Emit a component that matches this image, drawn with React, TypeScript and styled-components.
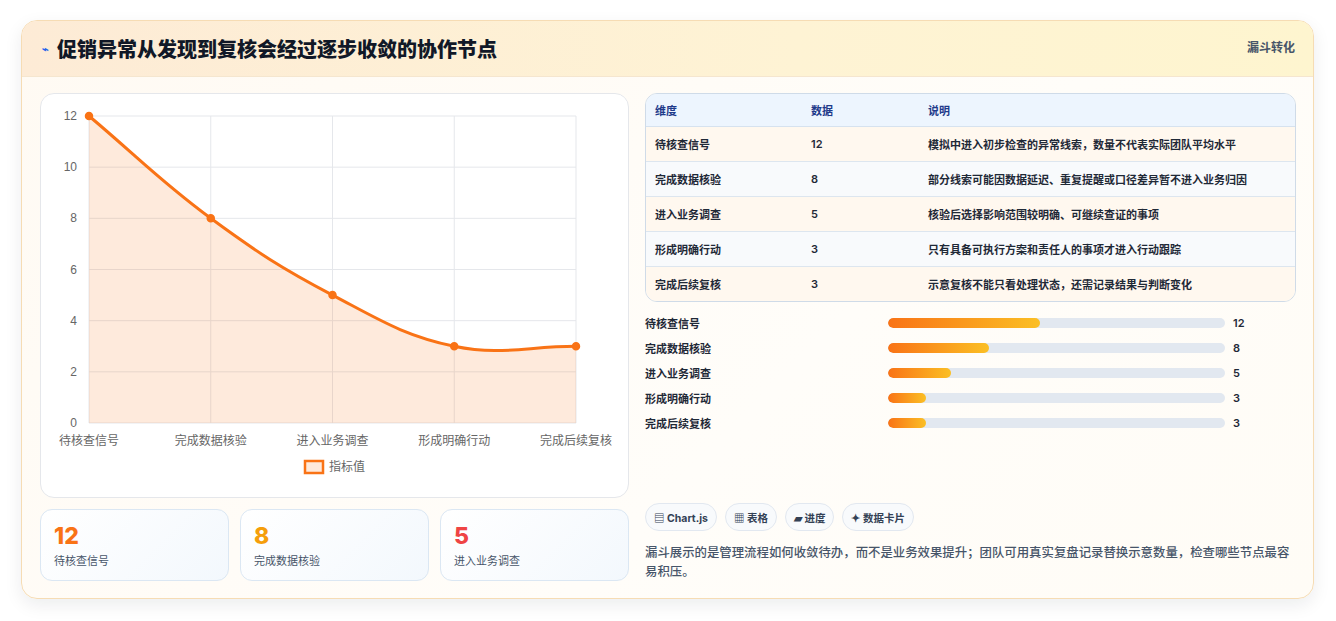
import React from 'react';
import styled, { createGlobalStyle } from 'styled-components';

const GlobalStyle = createGlobalStyle`
  body {
    margin: 0;
    background: #ffffff;
    font-family: Inter, "Noto Sans CJK SC", "Noto Sans", sans-serif;
  }
`;

const Page = styled.div`
  padding: 20px 22px 22px 21px;
`;

const Card = styled.section`
  border: 1px solid #f6dcb4;
  border-radius: 16px;
  background: linear-gradient(135deg, #fffaf3 0%, #fffdf9 60%, #fffcf6 100%);
  box-shadow: 0 6px 18px rgba(15, 23, 42, 0.08);
  overflow: hidden;
`;

const Header = styled.header`
  height: 55px;
  display: flex;
  justify-content: space-between;
  padding: 0 18px 0 20px;
  background: linear-gradient(90deg, #fdebd6 0%, #fef3d4 60%, #fef5cf 100%);
  border-bottom: 1px solid #f5e6cf;
`;

const Title = styled.h1`
  margin: 0;
  align-self: center;
  font-size: 20px;
  font-weight: 800;
  color: #111827;
  display: flex;
  align-items: center;
  gap: 8px;
`;

const TitleIcon = styled.span`
  font-size: 11px;
  color: #2563eb;
`;

const Tag = styled.span`
  margin-top: 17px;
  font-size: 12px;
  font-weight: 700;
  color: #475569;
`;

const Body = styled.div`
  display: grid;
  grid-template-columns: 589px 651px;
  gap: 16px;
  padding: 16px 17px 17px 18px;
`;

const Column = styled.div`
  display: flex;
  flex-direction: column;
`;

const ChartCard = styled.div`
  height: 403px;
  border: 1px solid #e5e7eb;
  border-radius: 14px;
  background: #ffffff;
`;

const Stats = styled.div`
  display: grid;
  grid-template-columns: repeat(3, 1fr);
  gap: 11px;
  margin-top: 11px;
`;

const StatCard = styled.div`
  height: 72px;
  box-sizing: border-box;
  padding: 12px 13px;
  border: 1px solid #dbe7f3;
  border-radius: 12px;
  background: linear-gradient(135deg, #ffffff 0%, #f3f8fd 100%);
`;

const StatValue = styled.div<{ $color: string }>`
  font-size: 23px;
  font-weight: 800;
  line-height: 28px;
  color: ${p => p.$color};
`;

const StatLabel = styled.div`
  font-size: 11px;
  color: #475569;
  margin-top: 2px;
`;

const Table = styled.table`
  width: 100%;
  border-collapse: separate;
  border-spacing: 0;
  border: 1px solid #cfdbe8;
  border-radius: 12px;
  overflow: hidden;
  font-size: 11px;
`;

const Th = styled.th`
  text-align: left;
  height: 32px;
  padding: 0 9px;
  background: #edf5fe;
  color: #1e3a8a;
  font-weight: 700;
  border-bottom: 1px solid #d6e2ef;
`;

const Tr = styled.tr<{ $alt: boolean }>`
  background: ${p => (p.$alt ? '#f8fafc' : '#fff8ef')};
`;

const Td = styled.td<{ $last: boolean }>`
  height: 34px;
  padding: 0 9px;
  color: #1f2937;
  font-weight: 600;
  border-bottom: ${p => (p.$last ? 'none' : '1px solid #dde6ef')};
`;

const Bars = styled.div`
  display: flex;
  flex-direction: column;
  gap: 11px;
  margin-top: 13px;
`;

const BarRow = styled.div`
  display: grid;
  grid-template-columns: 235px 337px auto;
  align-items: center;
  column-gap: 8px;
  height: 14px;
  font-size: 11px;
  font-weight: 600;
  color: #1f2937;
`;

const Track = styled.div`
  height: 10px;
  border-radius: 5px;
  background: #e2e8f0;
  overflow: hidden;
`;

const Fill = styled.div`
  height: 100%;
  border-radius: 5px;
  background: linear-gradient(90deg, #f97316, #fbbf24);
`;

const Chips = styled.div`
  display: flex;
  gap: 8px;
  margin-top: auto;
`;

const Chip = styled.span`
  height: 28px;
  box-sizing: border-box;
  display: inline-flex;
  align-items: center;
  padding: 0 8px;
  border: 1px solid #e2e8f0;
  border-radius: 14px;
  background: #f8fafc;
  font-size: 10.5px;
  font-weight: 700;
  color: #334155;
`;

const Note = styled.p`
  margin: 12px 0 0;
  font-size: 12.4px;
  line-height: 19px;
  font-weight: 500;
  color: #475569;
`;

const rows = [
  { name: '待核查信号', value: 12, desc: '模拟中进入初步检查的异常线索，数量不代表实际团队平均水平' },
  { name: '完成数据核验', value: 8, desc: '部分线索可能因数据延迟、重复提醒或口径差异暂不进入业务归因' },
  { name: '进入业务调查', value: 5, desc: '核验后选择影响范围较明确、可继续查证的事项' },
  { name: '形成明确行动', value: 3, desc: '只有具备可执行方案和责任人的事项才进入行动跟踪' },
  { name: '完成后续复核', value: 3, desc: '示意复核不能只看处理状态，还需记录结果与判断变化' },
];

const X0 = 48;
const X1 = 535;
const Y0 = 22;
const Y1 = 329;
const px = (i: number) => X0 + (i * (X1 - X0)) / 4;
const py = (v: number) => Y1 - (v / 12) * (Y1 - Y0);

// chart.js style spline, tension 0.4
const curvePath = () => {
  const pts = rows.map((r, i) => [px(i), py(r.value)]);
  const t = 0.4;
  const cps = pts.map((p, i) => {
    const prev = pts[i - 1] || p;
    const next = pts[i + 1] || p;
    const d01 = Math.hypot(p[0] - prev[0], p[1] - prev[1]);
    const d12 = Math.hypot(next[0] - p[0], next[1] - p[1]);
    const s = d01 + d12 || 1;
    const fa = (t * d01) / s;
    const fb = (t * d12) / s;
    return {
      prev: [p[0] - fa * (next[0] - prev[0]), p[1] - fa * (next[1] - prev[1])],
      next: [p[0] + fb * (next[0] - prev[0]), p[1] + fb * (next[1] - prev[1])],
    };
  });
  let d = `M${pts[0][0]},${pts[0][1]}`;
  for (let i = 1; i < pts.length; i++) {
    const a = cps[i - 1].next;
    const b = cps[i].prev;
    d += ` C${a[0]},${a[1]} ${b[0]},${b[1]} ${pts[i][0]},${pts[i][1]}`;
  }
  return d;
};

const LineChart: React.FC = () => {
  const line = curvePath();
  const area = `${line} L${X1},${Y1} L${X0},${Y1} Z`;
  return (
    <svg width="589" height="403" style={{ display: 'block' }}>
      {[0, 2, 4, 6, 8, 10, 12].map(v => (
        <g key={v}>
          <line x1={X0} x2={X1} y1={py(v)} y2={py(v)} stroke="#e5e7eb" />
          <text x={36} y={py(v) + 4} fontSize="12" fill="#666" textAnchor="end" fontFamily="Liberation Sans, sans-serif">{v}</text>
        </g>
      ))}
      {rows.map((r, i) => (
        <g key={r.name}>
          <line x1={px(i)} x2={px(i)} y1={Y0} y2={Y1} stroke="#e5e7eb" />
          <text x={px(i)} y={351} fontSize="12" fill="#666" textAnchor="middle">{r.name}</text>
        </g>
      ))}
      <path d={area} fill="rgba(249,115,22,0.15)" />
      <path d={line} fill="none" stroke="#f97316" strokeWidth="3" />
      {rows.map((r, i) => (
        <circle key={r.name} cx={px(i)} cy={py(r.value)} r="3.5" fill="#f97316" stroke="#f97316" strokeWidth="1.5" />
      ))}
      <rect x={264} y={367} width={18} height={12} fill="rgba(249,115,22,0.15)" stroke="#f97316" strokeWidth="2.5" />
      <text x={288} y={377} fontSize="12" fill="#666">指标值</text>
    </svg>
  );
};

const stats = [
  { value: 12, label: '待核查信号', color: '#f97316' },
  { value: 8, label: '完成数据核验', color: '#f59e0b' },
  { value: 5, label: '进入业务调查', color: '#ef4444' },
];

const App: React.FC = () => (
  <Page>
    <GlobalStyle />
    <Card>
      <Header>
        <Title><TitleIcon>⌁</TitleIcon>促销异常从发现到复核会经过逐步收敛的协作节点</Title>
        <Tag>漏斗转化</Tag>
      </Header>
      <Body>
        <Column>
          <ChartCard>
            <LineChart />
          </ChartCard>
          <Stats>
            {stats.map(s => (
              <StatCard key={s.label}>
                <StatValue $color={s.color}>{s.value}</StatValue>
                <StatLabel>{s.label}</StatLabel>
              </StatCard>
            ))}
          </Stats>
        </Column>
        <Column>
          <Table>
            <thead>
              <tr>
                <Th style={{ width: 138 }}>维度</Th>
                <Th style={{ width: 99 }}>数据</Th>
                <Th>说明</Th>
              </tr>
            </thead>
            <tbody>
              {rows.map((r, i) => (
                <Tr key={r.name} $alt={i % 2 === 1}>
                  <Td $last={i === rows.length - 1}>{r.name}</Td>
                  <Td $last={i === rows.length - 1}>{r.value}</Td>
                  <Td $last={i === rows.length - 1}>{r.desc}</Td>
                </Tr>
              ))}
            </tbody>
          </Table>
          <Bars>
            {rows.map(r => (
              <BarRow key={r.name}>
                <span>{r.name}</span>
                <Track>
                  <Fill style={{ width: `${r.value * 3.75}%` }} />
                </Track>
                <span>{r.value}</span>
              </BarRow>
            ))}
          </Bars>
          <Chips>
            <Chip>▤ Chart.js</Chip>
            <Chip>▦ 表格</Chip>
            <Chip>▰ 进度</Chip>
            <Chip>✦ 数据卡片</Chip>
          </Chips>
          <Note>漏斗展示的是管理流程如何收敛待办，而不是业务效果提升；团队可用真实复盘记录替换示意数量，检查哪些节点最容易积压。</Note>
        </Column>
      </Body>
    </Card>
  </Page>
);

export default App;
